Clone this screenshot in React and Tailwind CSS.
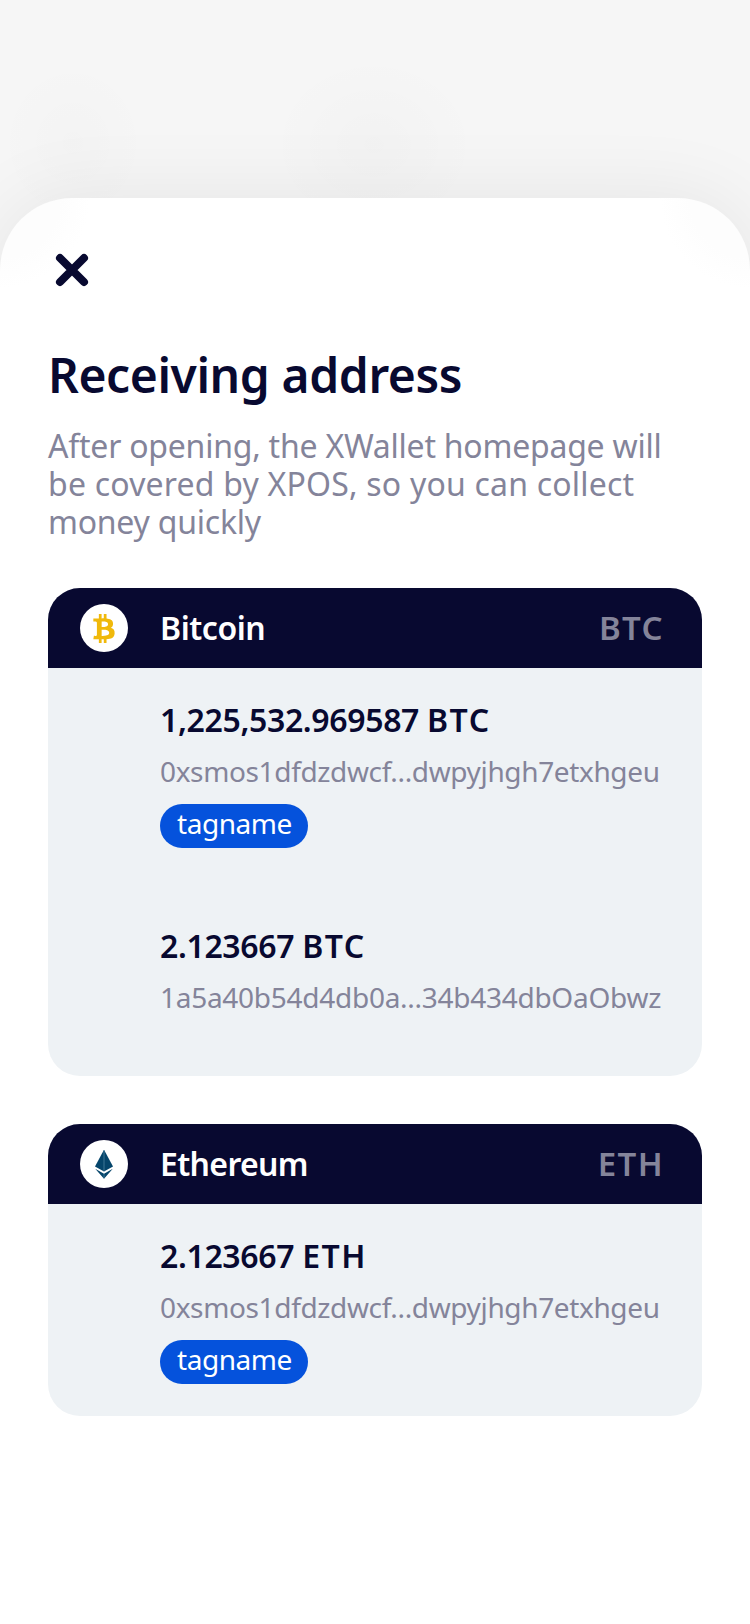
import { FaBtc } from "react-icons/fa";

function EthMark() {
  return (
    <svg viewBox="0 0 48 48" className="size-12">
      <path d="M24 9.7 33 26.4 24 31.6 15 26.4Z" fill="#05456b" />
      <path d="M15.2 28.8 24 33.8 32.8 28.8 24 38.7Z" fill="#05456b" />
      <path d="M24 10.5V31.2M24 34.2V38.2" stroke="#3f7795" strokeWidth="1" />
    </svg>
  );
}

function Tag() {
  return (
    <div className="mt-[17px] h-11 w-[148px] rounded-full bg-[#0552dc] pl-[17px] text-[28px] leading-[38px] tracking-[-0.45px] text-white">
      tagname
    </div>
  );
}

function Entry({ amount, unit, address, tag, className = "", addressClass }) {
  return (
    <div className={`pl-28 pt-8 ${className}`}>
      <div className="text-[32px] font-semibold leading-10 tracking-[-0.35px] text-[#080930]">
        {amount} <span className="tracking-[1.5px]">{unit}</span>
      </div>
      <div className={`mt-[15px] text-[28px] leading-8 text-[#84849a] ${addressClass}`}>{address}</div>
      {tag && <Tag />}
    </div>
  );
}

function Coin({ icon, name, nameClass, symbol, children }) {
  return (
    <section className="overflow-hidden rounded-[32px] bg-[#eef2f5]">
      <header className="flex h-20 items-center bg-[#080930] pl-8 pr-[38px] text-[33px] font-semibold leading-10">
        <div className="flex size-12 items-center justify-center rounded-full bg-white">{icon}</div>
        <div className={`ml-8 flex-1 text-[32px] text-white ${nameClass}`}>{name}</div>
        <div className="tracking-[1.4px] text-[#84849a]">{symbol}</div>
      </header>
      {children}
    </section>
  );
}

export default function App() {
  return (
    <div className="h-[1624px] w-[750px] overflow-hidden whitespace-nowrap bg-[#f6f6f6] bg-[radial-gradient(ellipse_76px_84px_at_73px_143px,rgba(0,0,0,0.01),transparent),radial-gradient(ellipse_105px_90px_at_374px_145px,rgba(0,0,0,0.016),transparent)] pt-[198px] font-['Noto_Sans',sans-serif]">
      <main className="h-[1426px] rounded-t-[72px] bg-white bg-[radial-gradient(circle_at_0_0,#fdfdfd_60px,transparent_90px),radial-gradient(circle_at_100%_0,#fdfdfd_60px,transparent_90px)] px-12 pt-12 shadow-[0_0_80px_rgba(0,0,0,0.075)]">
        <button aria-label="Close" className="block size-12">
          <svg viewBox="0 0 48 48" className="size-12" fill="none" stroke="#080930" strokeWidth="8" strokeLinecap="round">
            <path d="M12 12 36 36M36 12 12 36" />
          </svg>
        </button>
        <h1 className="mt-[53px] text-5xl font-semibold leading-[56px] tracking-[-0.42px] text-[#080930]">Receiving address</h1>
        <p className="mt-6 text-[32px] leading-[38px] tracking-[-0.23px] text-[#84849a]">
          After opening, the XWallet homepage will
          <br />
          <span className="tracking-[0.2px]">be covered by XPOS, so you can collect</span>
          <br />
          money quickly
        </p>
        <div className="mt-[47px] flex flex-col gap-12">
          <Coin icon={<FaBtc className="h-[29px] w-[22px] text-[#f0b90b]" />} name="Bitcoin" nameClass="tracking-[-0.45px]" symbol="BTC">
            <Entry amount="1,225,532.969587" unit="BTC" address="0xsmos1dfdzdwcf...dwpyjhgh7etxhgeu" addressClass="tracking-[-0.36px]" tag />
            <Entry amount="2.123667" unit="BTC" address="1a5a40b54d4db0a...34b434dbOaObwz" addressClass="tracking-[-0.27px]" className="mt-[46px] pb-[63px]" />
          </Coin>
          <Coin icon={<EthMark />} name="Ethereum" nameClass="tracking-[-0.65px]" symbol="ETH">
            <Entry amount="2.123667" unit="ETH" address="0xsmos1dfdzdwcf...dwpyjhgh7etxhgeu" addressClass="tracking-[-0.36px]" className="pb-8" tag />
          </Coin>
        </div>
      </main>
    </div>
  );
}
